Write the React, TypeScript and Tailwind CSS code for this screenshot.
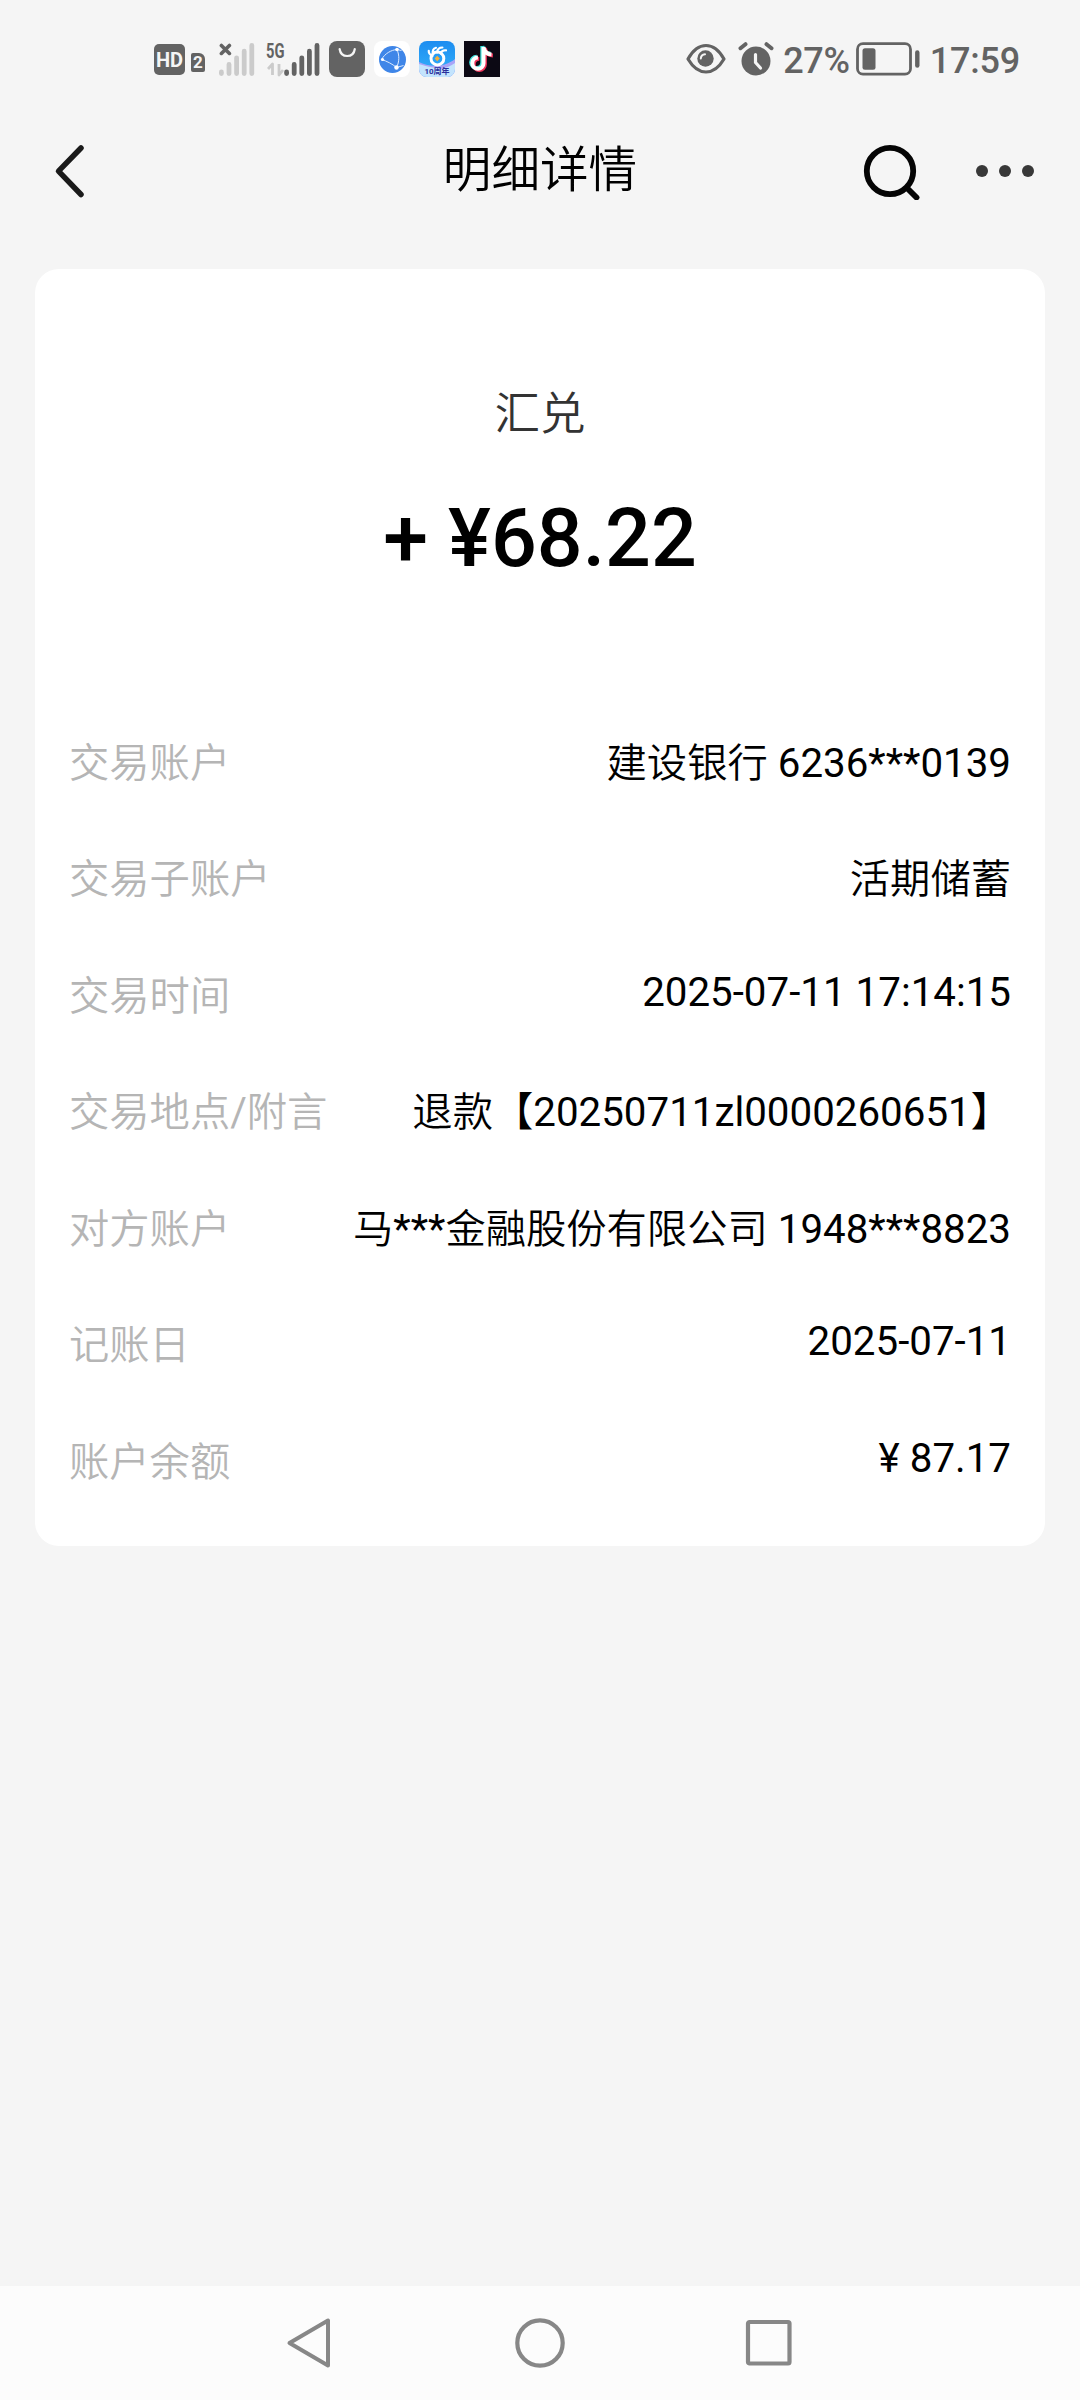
import type { ReactNode } from 'react'

interface DetailItem {
  label: string;
  value: string;
  latin?: boolean;
}

const details: DetailItem[] = [
  { label: '交易账户', value: '建设银行 6236***0139' },
  { label: '交易子账户', value: '活期储蓄' },
  { label: '交易时间', value: '2025-07-11 17:14:15', latin: true },
  { label: '交易地点/附言', value: '退款【20250711zl0000260651】' },
  { label: '对方账户', value: '马***金融股份有限公司 1948***8823' },
  { label: '记账日', value: '2025-07-11', latin: true },
  { label: '账户余额', value: '¥ 87.17', latin: true },
]

function SignalBars({ className }: { className: string }) {
  return (
    <g className={className} strokeWidth="4.8" strokeLinecap="round">
      <path d="M2.4 31v1.6M10 23.4v9.2M17.6 16.8v15.8M25.2 10.2v22.4M32.8 4.4v28.2" />
    </g>
  )
}

function HdIcon() {
  return (
    <div className="flex items-end">
      <div className="w-[31px] h-[31px] rounded-[5px] bg-[#636363] flex items-center justify-center">
        <span className="pt-[2px] text-[20px] leading-none font-bold text-[#f5f5f5]">HD</span>
      </div>
      <div className="ml-[6px] mb-[3px] w-[14px] h-[19px] rounded-[2px] rounded-tr-[6px] bg-[#636363] flex items-center justify-center">
        <span className="pt-px text-[17px] leading-none font-bold text-[#f5f5f5]">2</span>
      </div>
    </div>
  )
}

function NoSignalIcon() {
  return (
    <svg width="36" height="36" viewBox="0 0 36 36" fill="none">
      <SignalBars className="stroke-[#cbcbcb]" />
      <path d="M2.4 4.4l8 8M10.4 4.4l-8 8" stroke="#636363" strokeWidth="3.6" strokeLinecap="round" />
    </svg>
  )
}

function MobileSignalIcon() {
  return (
    <div className="relative w-[53px] h-[36px]">
      <span className="absolute left-[-1px] top-0 text-[21px] leading-[20px] font-bold scale-x-[0.7] origin-left">
        5G
      </span>
      <svg className="absolute inset-0" width="53" height="36" viewBox="0 0 53 36" fill="none">
        <path d="M1 28l4.5-5v11M12 23v11l4-5" stroke="#cbcbcb" strokeWidth="2.8" strokeLinejoin="round" />
        <g transform="translate(17.2 0)">
          <SignalBars className="stroke-[#636363]" />
        </g>
      </svg>
    </div>
  )
}

function BagIcon() {
  return (
    <svg width="36" height="36" viewBox="0 0 36 36" fill="none">
      <rect width="36" height="36" rx="8" fill="#636363" />
      <path d="M10.6 8c.6 4.3 3.6 7 7.6 7s7-2.7 7.6-7" stroke="#f5f5f5" strokeWidth="2.2" strokeLinecap="round" />
    </svg>
  )
}

function GlobeIcon() {
  return (
    <svg width="36" height="36" viewBox="0 0 36 36" fill="none">
      <rect width="36" height="36" rx="8" fill="#fff" />
      <circle cx="18.5" cy="18.5" r="13.5" fill="#3f86e8" />
      <path
        d="M7.5 18.5C11 12.5 17 9 23 8.5M7.5 18.5c5 1.5 11 4.500 15 8M23 8.5c2.5 6 2.5 12-.5 18M22.5 26.5l7-2M23 8.5l4.5 1"
        stroke="#dcebff"
        strokeWidth="1"
      />
      <circle cx="8.5" cy="18.5" r="1.6" fill="#fff" />
      <circle cx="23" cy="8.5" r="1.8" fill="#fff" />
      <circle cx="22.5" cy="26.5" r="2.2" fill="#fff" />
    </svg>
  )
}

function AnniversaryIcon() {
  return (
    <div className="relative w-[36px] h-[36px] rounded-[8px] overflow-hidden">
      <svg width="36" height="36" viewBox="0 0 36 36" fill="none">
        <defs>
          <linearGradient id="sky" x1="0" y1="0" x2="0" y2="1">
            <stop offset="0" stopColor="#1d8df0" />
            <stop offset="1" stopColor="#35b3fb" />
          </linearGradient>
        </defs>
        <rect width="36" height="36" fill="url(#sky)" />
        <path d="M0 21c9 5 25 6 36-3v18H0z" fill="#a9a4f7" />
        <path d="M0 23c9 3 18 4 22 5 5-1 10-3 14-6v14H0z" fill="#c3e4fd" />
        <path
          d="M13.500 15C10.500 13.500 9.500 11.500 9.800 9.800M14 13c-.8-3 .2-5.500 3-6.200M18 11.500c.4-3 2.600-5 5.400-5M21.500 12.500c1-2.500 3-3.500 5.500-3.200"
          stroke="#fff"
          strokeWidth="2.2"
          strokeLinecap="round"
        />
        <circle cx="18.4" cy="17.5" r="6.4" stroke="#fff" strokeWidth="3" />
        <path d="M18.2 14.8l2.6 2.7-2.6 2.7-2.600-2.700z" fill="#f3b13c" />
      </svg>
      <span className="absolute left-[-7px] right-[-7px] bottom-[1px] text-center text-[8px] leading-[8px] font-bold text-[#2b2f9c] whitespace-nowrap">
        10周年
      </span>
    </div>
  )
}

function MusicNoteIcon() {
  const note = 'M19.5 6v16.2a5.6 5.6 0 1 1-5.6-5.6M19.5 6c.6 4.6 3.7 7.2 8 7.4'
  return (
    <svg width="36" height="36" viewBox="0 0 36 36" fill="none" strokeWidth="4">
      <rect width="36" height="36" fill="#0c0914" />
      <path d={note} stroke="#3fe0dc" transform="translate(-1.2 -0.9)" />
      <path d={note} stroke="#f0365c" transform="translate(1.4 1.1)" />
      <path d={note} stroke="#fff" />
    </svg>
  )
}

function EyeIcon() {
  return (
    <svg width="40" height="32" viewBox="0 0 40 32" fill="none">
      <path
        d="M2 16C7 7 13 2.5 20 2.5S33 7 38 16c-5 8.5-11 13-18 13S7 24.5 2 16z"
        stroke="#636363"
        strokeWidth="3.2"
        strokeLinejoin="round"
      />
      <circle cx="19.5" cy="15.5" r="8.2" fill="#636363" />
      <path d="M14.8 15.5c.2-2.6 1.8-4 4.2-4.2" stroke="#f5f5f5" strokeWidth="2" strokeLinecap="round" />
    </svg>
  )
}

function AlarmIcon() {
  return (
    <svg width="36" height="34" viewBox="0 0 36 34" fill="none">
      <circle cx="18" cy="19" r="14.5" fill="#636363" />
      <path d="M2.5 6.2l5-4M33.5 6.2l-5-4" stroke="#636363" strokeWidth="4" strokeLinecap="round" />
      <path d="M17.5 12.5v8l5 5.5" stroke="#f5f5f5" strokeWidth="3.2" strokeLinecap="round" strokeLinejoin="round" />
    </svg>
  )
}

function BatteryIcon() {
  return (
    <svg width="64" height="34" viewBox="0 0 64 34" fill="none">
      <rect x="1.5" y="1.7" width="53" height="30.5" rx="5.5" stroke="#636363" strokeWidth="2.8" />
      <rect x="6.5" y="6.2" width="13" height="21.5" rx="2.5" fill="#636363" />
      <path d="M61.3 10.5v13" stroke="#636363" strokeWidth="4.4" strokeLinecap="round" />
    </svg>
  )
}

function StatusBar() {
  return (
    <div className="h-[118px] pl-[154px] pr-[60px] flex items-center justify-between text-[#636363]">
      <div className="flex items-center">
        <HdIcon />
        <div className="ml-[14px] flex"><NoSignalIcon /></div>
        <div className="ml-[12px]"><MobileSignalIcon /></div>
        <div className="ml-[9px] flex gap-[9px]">
          <BagIcon />
          <GlobeIcon />
          <AnniversaryIcon />
          <MusicNoteIcon />
        </div>
      </div>
      <div className="flex items-center">
        <EyeIcon />
        <div className="ml-[12px]"><AlarmIcon /></div>
        <span className="ml-[9px] pt-[3px] text-[36px] leading-none font-medium tracking-[-0.3px]">27%</span>
        <div className="ml-[6px]"><BatteryIcon /></div>
        <span className="ml-[10px] pt-[3px] text-[36px] leading-none font-medium tracking-[-0.2px]">17:59</span>
      </div>
    </div>
  )
}

function IconButton({ label, children }: { label: string; children: ReactNode }) {
  return (
    <button type="button" aria-label={label} className="flex">
      {children}
    </button>
  )
}

function Header() {
  return (
    <header className="h-[106px] px-[45px] grid grid-cols-[1fr_auto_1fr] items-center">
      <div className="pl-[8px]">
        <IconButton label="返回">
          <svg width="34" height="56" viewBox="0 0 34 56" fill="none">
            <path d="M28 5L5.5 28.2 28 51.5" stroke="#1a1a1a" strokeWidth="5.5" strokeLinecap="round" strokeLinejoin="round" />
          </svg>
        </IconButton>
      </div>
      <h1 className="text-[48.6px] leading-[60px] font-[350] text-black">明细详情</h1>
      <div className="flex items-center justify-end gap-[55px]">
        <IconButton label="搜索">
          <svg width="58" height="58" viewBox="0 0 58 58" fill="none" stroke="#050505" strokeWidth="5.8" strokeLinecap="round">
            <circle cx="28" cy="29" r="23.2" />
            <path d="M45.5 46.5l9 9" />
          </svg>
        </IconButton>
        <IconButton label="更多">
          <svg width="60" height="14" viewBox="0 0 60 14" fill="#383838">
            <circle cx="7" cy="7" r="6" />
            <circle cx="30" cy="7" r="6" />
            <circle cx="53" cy="7" r="6" />
          </svg>
        </IconButton>
      </div>
    </header>
  )
}

// Hanzi runs are set a little lighter than the digits beside them
function MixedText({ text }: { text: string }) {
  const parts = text.split(/([\u4e00-\u9fff]+)/)
  return (
    <>
      {parts.map((part, i) => (
        <span key={i} className={i % 2 === 1 ? 'font-[350]' : 'font-normal'}>{part}</span>
      ))}
    </>
  )
}

function DetailRow({ item }: { item: DetailItem }) {
  return (
    <div className="h-[116.5px] flex items-center justify-between text-[40.3px] leading-[60px] whitespace-nowrap">
      <dt className="text-[#b5b5b5]"><MixedText text={item.label} /></dt>
      <dd className={item.latin ? 'text-black pb-2' : 'text-black'}><MixedText text={item.value} /></dd>
    </div>
  )
}

function NavBar() {
  return (
    <nav className="h-[114px] pl-[285px] pr-[286px] bg-[#fcfcfc] flex items-center justify-between">
      <svg width="48" height="54" viewBox="0 0 48 54" fill="none">
        <path d="M43 4.5v45L4.500 27z" stroke="#878787" strokeWidth="4" strokeLinejoin="round" />
      </svg>
      <svg width="54" height="54" viewBox="0 0 54 54" fill="none">
        <circle cx="28" cy="27" r="22.7" stroke="#878787" strokeWidth="4.2" />
      </svg>
      <svg width="50" height="54" viewBox="0 0 50 54" fill="none">
        <rect x="4" y="6" width="41.5" height="41.5" rx="1.5" stroke="#878787" strokeWidth="4.2" />
      </svg>
    </nav>
  )
}

export default function App() {
  return (
    <div className="w-[1080px] h-[2400px] bg-[#f5f5f5] flex flex-col overflow-hidden font-[Roboto,'Noto_Sans_CJK_SC',sans-serif]">
      <StatusBar />
      <Header />
      <main className="flex-1 px-[35px] pt-[45px]">
        <section className="h-[1277px] rounded-[24px] bg-white px-[34px] pt-[112px]">
          <p className="text-center text-[45.5px] leading-[68px] font-[350] text-[#333333]">汇兑</p>
          <p className="mt-[40px] text-center text-[80.7px] leading-[100px] font-medium text-black">+ ¥68.22</p>
          <dl className="mt-[116.5px]">
            {details.map((item) => (
              <DetailRow key={item.label} item={item} />
            ))}
          </dl>
        </section>
      </main>
      <NavBar />
    </div>
  )
}
